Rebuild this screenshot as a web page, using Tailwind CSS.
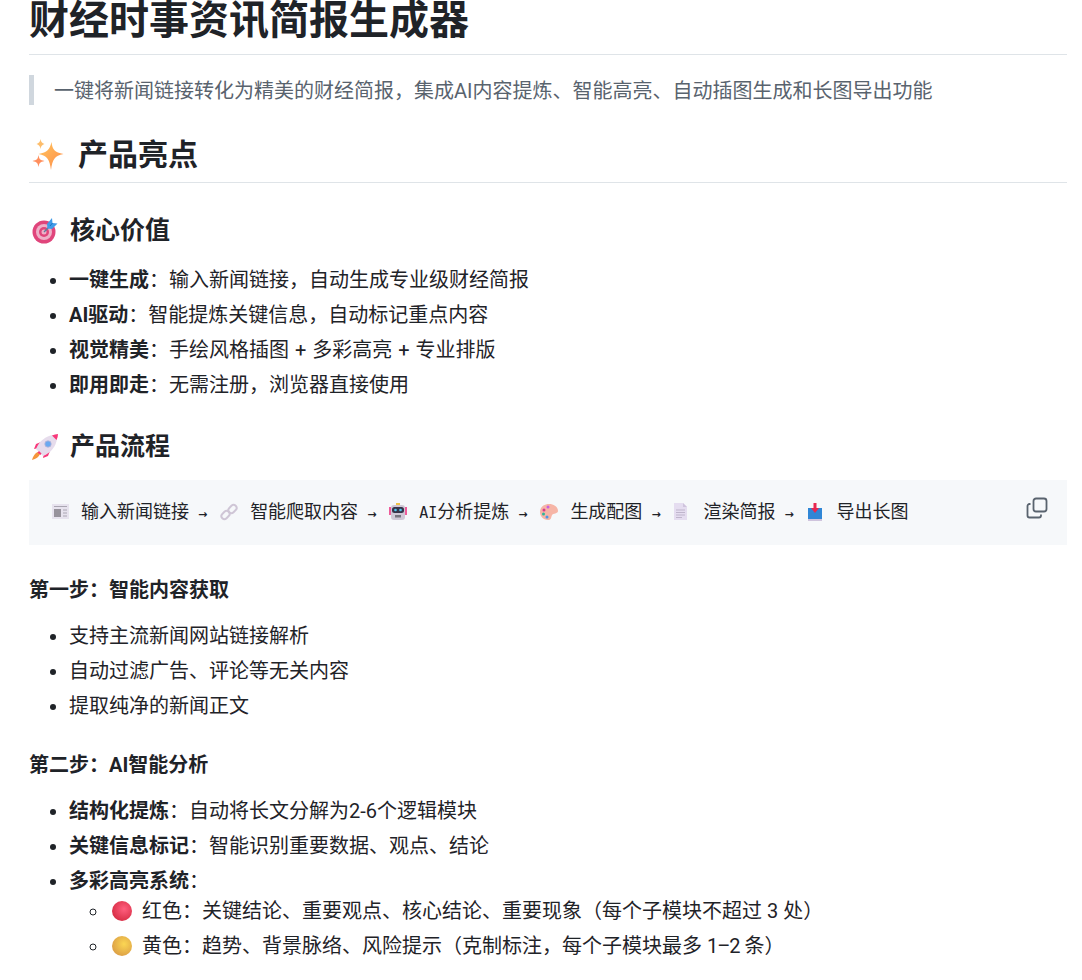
<!DOCTYPE html>
<html>
<head>
    <meta charset="utf-8">
    <title>财经时事资讯简报生成器</title>
    <script src="https://cdn.jsdelivr.net/npm/@tailwindcss/browser@4"></script>
</head>
<body class="bg-white overflow-hidden">
    <div class="h-[980px] overflow-hidden">
    <div class="pl-[29px] pr-[15px] text-[20px] leading-[35px] text-[#1f2328] font-['Roboto','Noto_Sans_CJK_SC',sans-serif]">

        <!-- title -->
        <h1 class="-mt-[9px] h-[64px] text-[40px] leading-[60px] font-bold border-b border-[#dfe4e8]">财经时事资讯简报生成器</h1>

        <blockquote class="mt-[20px] h-[30px] border-l-[5px] border-[#d0d7de] pl-[20px] text-[#59636e] leading-[32px]">一键将新闻链接转化为精美的财经简报，集成AI内容提炼、智能高亮、自动插图生成和长图导出功能</blockquote>

        <!-- 产品亮点 -->
        <h2 class="mt-[25px] h-[53px] flex items-center text-[30px] leading-[40px] font-bold border-b border-[#dfe4e8] pb-[2px]">
            <svg class="ml-[3px] mr-[13px] w-[33px] h-[32px]" viewBox="0 0 32 32">
                <defs><linearGradient id="sp" x1="0" y1="0" x2="1" y2="1"><stop offset="0" stop-color="#ffc65c"/><stop offset="1" stop-color="#ff8a4a"/></linearGradient></defs>
                <path d="M19 3C20 11 22 13 31 15 22 17 20 20 18.500 31 17 20 15 17 6 15 15 13 17 11 19 3Z" fill="url(#sp)"/>
                <path d="M8 0C8.500 3 9.500 4 12 5 9.500 6 8.500 7 8 10 7.500 7 6.500 6 4 5 6.500 4 7.500 3 8 0Z" fill="#fdbd6b"/>
                <path d="M6 16C6.700 20 7.500 21 12 22 7.500 23 6.700 24 6 28 5.300 24 4.500 23 0 22 4.500 21 5.300 20 6 16Z" fill="#ff8f5e"/>
            </svg>
            产品亮点
        </h2>

        <!-- 核心价值 -->
        <h3 class="mt-[30px] h-[35px] flex items-center text-[25px] font-bold">
            <svg class="ml-[3px] mr-[12px] w-[26px] h-[26px]" viewBox="0 0 26 26">
                <circle cx="12" cy="14" r="11.500" fill="#e0457b"/>
                <circle cx="12" cy="14" r="8" fill="#eeb0c8"/>
                <circle cx="12" cy="14" r="5" fill="#e0457b"/>
                <circle cx="12" cy="14" r="2.500" fill="#eeb0c8"/>
                <path d="M12 14 20 6" stroke="#5c7f9e" stroke-width="1.500"/>
                <path d="M15 6 20 0 20.500 5 25.500 5.500 20 11 15.500 10.500Z" fill="#3f9be8"/>
                <path d="M18 8 20.500 5" stroke="#1f6fc0" stroke-width="1"/>
            </svg>
            核心价值
        </h3>
        <ul class="mt-[15px] pl-[40px] list-disc">
            <li><strong>一键生成</strong>：输入新闻链接，自动生成专业级财经简报</li>
            <li><strong>AI驱动</strong>：智能提炼关键信息，自动标记重点内容</li>
            <li><strong>视觉精美</strong>：手绘风格插图 <span class="mx-[1px]">+</span> 多彩高亮 <span class="mx-[1px]">+</span> 专业排版</li>
            <li><strong>即用即走</strong>：无需注册，浏览器直接使用</li>
        </ul>

        <!-- 产品流程 -->
        <h3 class="mt-[26px] h-[35px] flex items-center text-[25px] font-bold">
            <svg class="ml-[3px] mr-[12px] w-[26px] h-[26px]" viewBox="0 0 26 26">
                <path d="M9 8 4 10 2 15 7 14Z" fill="#f8387a"/>
                <path d="M18 17 16 22 11 24 12 19Z" fill="#f8387a"/>
                <path d="M6 18C3 19 1 22 0 26 4 25 7 23 8 20Z" fill="#f5963c"/>
                <path d="M4 15C7 7 14 2 21 1L25 5C24 12 19 19 11 22Z" fill="#e6dcec"/>
                <path d="M20 1.500C22 0.500 24 0 26 0 26 2 25.500 4 24.500 6Z" fill="#f8387a"/>
                <path d="M7 17 9.500 19.500 8.500 21 5.500 18.500Z" fill="#f8387a"/>
                <circle cx="16" cy="10" r="3.200" fill="#6aa9f0" stroke="#b9b4d6" stroke-width="0.800"/>
            </svg>
            产品流程
        </h3>
        <div class="relative mt-[16px] h-[65px] bg-[#f6f8fa] pl-[22px] pt-[2px] flex items-center">
            <pre class="whitespace-pre text-[15px] leading-[30px] text-[#1f2328] font-['DejaVu_Sans_Mono','Noto_Sans_CJK_SC',monospace]"><svg class="inline-block align-[-3px] w-[21px] h-[18px]" viewBox="0 0 21 18"><rect x="1" y="1" width="17" height="15" fill="#e7e3ee"/><rect x="3" y="6" width="7" height="8" fill="#97939c"/><path d="M3 3.500H16M12 7H16M12 10H16M12 13H16" stroke="#aaa6b2"/></svg> <span class="text-[18px]">输入新闻链接</span> <span class="inline-block w-[13px] text-[11px] font-bold font-['DejaVu_Sans',sans-serif]">→</span> <svg class="inline-block align-[-3px] w-[21px] h-[18px]" viewBox="0 0 21 18"><g fill="none" stroke="#cfc6d6" stroke-width="2"><rect x="1" y="9" width="9" height="6" rx="3" transform="rotate(-45 5.500 12)"/><rect x="8" y="3" width="9" height="6" rx="3" transform="rotate(-45 12.500 6)"/></g></svg> <span class="text-[18px]">智能爬取内容</span> <span class="inline-block w-[13px] text-[11px] font-bold font-['DejaVu_Sans',sans-serif]">→</span> <svg class="inline-block align-[-3px] w-[21px] h-[18px]" viewBox="0 0 21 18"><rect x="0" y="4" width="2" height="8" fill="#ee5c9a"/><rect x="16" y="4" width="2" height="8" fill="#ee5c9a"/><rect x="7" y="0" width="4" height="2" fill="#f0c24a"/><rect x="2" y="2" width="14" height="15" rx="3" fill="#cfc8d6"/><rect x="3" y="4" width="12" height="6" rx="2.500" fill="#37344a"/><circle cx="6.500" cy="7" r="1.300" fill="#4fc8ef"/><circle cx="11.500" cy="7" r="1.300" fill="#4fc8ef"/><rect x="6" y="12" width="6" height="2.500" fill="#77747f"/></svg> <span>AI</span><span class="text-[18px]">分析提炼</span> <span class="inline-block w-[13px] text-[11px] font-bold font-['DejaVu_Sans',sans-serif]">→</span> <svg class="inline-block align-[-3px] w-[21px] h-[18px]" viewBox="0 0 21 18"><path d="M9 1C14 1 18 4 18 8 18 11 13 10 12 12 11 15 11 17 8 17 3 17 0 13 0 9 0 4 4 1 9 1Z" fill="#f6b5a6"/><circle cx="4" cy="7" r="1.500" fill="#d83a8c"/><circle cx="8" cy="4" r="1.500" fill="#c95fe0"/><circle cx="3.500" cy="11" r="1.500" fill="#2fb59c"/><circle cx="7" cy="14" r="1.500" fill="#4a98e8"/></svg> <span class="text-[18px]">生成配图</span> <span class="inline-block w-[13px] text-[11px] font-bold font-['DejaVu_Sans',sans-serif]">→</span> <svg class="inline-block align-[-3px] w-[21px] h-[18px]" viewBox="0 0 21 18"><path d="M1 0H10L14 4V17H1Z" fill="#e5ddf0"/><path d="M10 0 14 4H10Z" fill="#cfc4dd"/><path d="M3 7H12M3 9.500H12M3 12H12M3 14.500H9" stroke="#bfb5cc"/></svg> <span class="text-[18px]">渲染简报</span> <span class="inline-block w-[13px] text-[11px] font-bold font-['DejaVu_Sans',sans-serif]">→</span> <svg class="inline-block align-[-3px] w-[21px] h-[18px]" viewBox="0 0 21 18"><path d="M1 13H15V18H1Z" fill="#cfc4dd"/><rect x="1" y="5" width="14" height="11" fill="#2f86d6"/><path d="M6.500 0H9.500V5H12L8 10 4 5H6.500Z" fill="#e8274f"/></svg> <span class="text-[18px]">导出长图</span></pre>
            <!-- copy button -->
            <svg class="absolute right-[19px] top-[17px] w-[22px] h-[22px]" viewBox="0 0 22 22" fill="none" stroke="#59636e" stroke-width="1.800">
                <rect x="7.500" y="1.500" width="13" height="13" rx="2.500"/>
                <path d="M4.500 7H3.500C2.400 7 1.500 7.900 1.500 9V18.500C1.500 19.600 2.400 20.500 3.500 20.500H13C14.100 20.500 15 19.600 15 18.500V17.500"/>
            </svg>
        </div>

        <!-- 第一步 -->
        <h4 class="mt-[28px] h-[35px] font-bold">第一步：智能内容获取</h4>
        <ul class="mt-[11px] pl-[40px] list-disc">
            <li>支持主流新闻网站链接解析</li>
            <li>自动过滤广告、评论等无关内容</li>
            <li>提取纯净的新闻正文</li>
        </ul>

        <!-- 第二步 -->
        <h4 class="mt-[24px] h-[35px] font-bold">第二步：AI智能分析</h4>
        <ul class="mt-[11px] pl-[40px] list-disc">
            <li><strong>结构化提炼</strong>：自动将长文分解为2-6个逻辑模块</li>
            <li><strong>关键信息标记</strong>：智能识别重要数据、观点、结论</li>
            <li><strong>多彩高亮系统</strong>：
                <ul class="-mt-[5px] pl-[40px] list-[circle]">
                    <li><svg class="inline-block align-[-3px] ml-[3px] mr-[10px] w-[20px] h-[20px]" viewBox="0 0 20 20"><defs><radialGradient id="red" cx="0.6" cy="0.4" r="0.7"><stop offset="0" stop-color="#ff5f7e"/><stop offset="1" stop-color="#d4283f"/></radialGradient></defs><circle cx="10" cy="10" r="10" fill="url(#red)"/></svg>红色：关键结论、重要观点、核心结论、重要现象（每个子模块不超过 3 处）</li>
                    <li><svg class="inline-block align-[-3px] ml-[3px] mr-[10px] w-[20px] h-[20px]" viewBox="0 0 20 20"><defs><radialGradient id="yel" cx="0.6" cy="0.4" r="0.7"><stop offset="0" stop-color="#fbd653"/><stop offset="1" stop-color="#d99a45"/></radialGradient></defs><circle cx="10" cy="10" r="10" fill="url(#yel)"/></svg>黄色：趋势、背景脉络、风险提示（克制标注，每个子模块最多 <span class="tracking-[-1px]">1–2</span> 条）</li>
                </ul>
            </li>
        </ul>
    </div>
    </div>
</body>
</html>
